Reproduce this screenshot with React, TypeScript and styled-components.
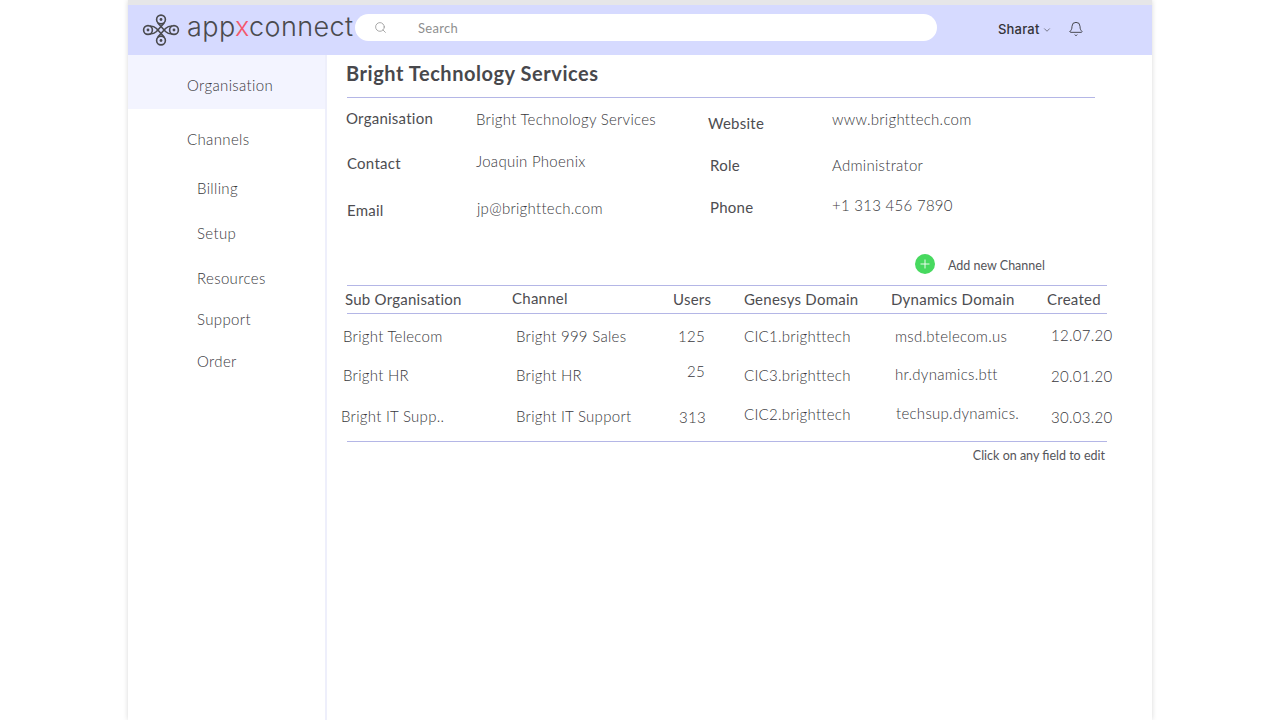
import React from 'react';
import styled, { createGlobalStyle } from 'styled-components';
import { Search, ChevronDown, Bell, Plus } from 'lucide-react';

const GlobalStyle = createGlobalStyle`
  html, body {
    margin: 0;
    padding: 0;
    height: 100%;
    background: #ffffff;
    overflow: hidden;
    font-family: 'Lato', 'Liberation Sans', sans-serif;
    color: #4a4a4a;
  }
  #root { height: 100%; }
`;

const Frame = styled.div`
  width: 1024px;
  height: 720px;
  margin: 0 auto;
  display: flex;
  flex-direction: column;
  background: #ffffff;
  box-shadow: 0 0 5px rgba(0, 0, 0, 0.16);
`;

const TopStrip = styled.div`
  height: 5px;
  background: #e6e6e8;
`;

const Header = styled.header`
  height: 50px;
  flex-shrink: 0;
  display: flex;
  align-items: center;
  background: #d6daff;
  padding-left: 14px;
`;

const LogoMark = styled.svg`
  width: 38px;
  height: 32px;
  flex-shrink: 0;
  color: #4a4a4e;
`;

const LogoText = styled.div`
  margin-left: 7px;
  width: 168px;
  font-family: 'Inter', 'Liberation Sans', sans-serif;
  font-size: 27px;
  font-weight: 300;
  letter-spacing: 0.4px;
  color: #4a4a4e;
  margin-top: -7px;
  white-space: nowrap;
`;

const RedX = styled.span`
  color: #f4586c;
`;

const SearchBar = styled.div`
  width: 582px;
  height: 27px;
  margin-top: -5px;
  display: flex;
  align-items: center;
  background: #ffffff;
  border-radius: 14px;
  padding-left: 19px;
  box-sizing: border-box;
  color: #8f8f8f;
  font-size: 13px;
`;

const SearchLabel = styled.span`
  margin-left: 31px;
  letter-spacing: 0.3px;
`;

const UserArea = styled.div`
  margin-left: 61px;
  margin-top: -3px;
  display: flex;
  align-items: center;
  font-family: 'Inter', 'Liberation Sans', sans-serif;
  font-size: 13px;
  font-weight: 500;
  letter-spacing: 0.2px;
  color: #333338;
`;

const Chevron = styled(ChevronDown)`
  margin-left: 2px;
  margin-top: 2px;
`;

const BellWrap = styled.span`
  margin-left: 16px;
  display: flex;
`;

const Body = styled.div`
  flex: 1;
  display: flex;
  min-height: 0;
`;

const Sidebar = styled.nav`
  width: 197px;
  flex-shrink: 0;
  border-right: 2px solid #eeeffb;
  display: flex;
  flex-direction: column;
`;

const NavItem = styled.div<{ $active?: boolean; $sub?: boolean; $h: number }>`
  height: ${p => p.$h}px;
  box-sizing: border-box;
  display: flex;
  align-items: center;
  padding-left: ${p => (p.$sub ? 69 : 59)}px;
  padding-top: ${p => (p.$active ? 5 : 0)}px;
  background: ${p => (p.$active ? '#f3f4ff' : 'transparent')};
  font-size: 15px;
  font-weight: 300;
  letter-spacing: 0.35px;
  color: #38383c;
`;

const Main = styled.main`
  flex: 1;
  padding: 6px 0 0 19px;
  display: flex;
  flex-direction: column;
`;

const Title = styled.h1`
  margin: 0;
  font-size: 20px;
  font-weight: 700;
  line-height: 24px;
  letter-spacing: 0.55px;
  color: #48484c;
`;

const Rule = styled.div<{ $w: number }>`
  width: ${p => p.$w}px;
  height: 1px;
  margin-left: 1px;
  background: #b4b6e6;
`;

const TitleRule = styled(Rule)`
  margin-top: 12px;
`;

const InfoGrid = styled.div`
  display: grid;
  grid-template-columns: 130px 232px 124px 1fr;
  grid-template-rows: 45px 46px 46px;
  padding-top: 10px;
`;

const Cell = styled.div<{ $top?: number; $left?: number; $strong?: boolean }>`
  margin-top: ${p => p.$top ?? 0}px;
  margin-left: ${p => p.$left ?? 0}px;
  font-size: 15px;
  line-height: 20px;
  font-weight: ${p => (p.$strong ? 400 : 300)};
  letter-spacing: ${p => (p.$strong ? 0.25 : 0.28)}px;
  white-space: nowrap;
  color: ${p => (p.$strong ? '#4d4d51' : '#38383c')};
`;

const AddRow = styled.div`
  margin-top: 5px;
  height: 28px;
  display: flex;
  align-items: center;
  padding-left: 569px;
  font-size: 12.5px;
  color: #55555a;
`;

const AddLabel = styled.span`
  margin-top: 2px;
`;

const AddCircle = styled.span`
  width: 20px;
  height: 20px;
  border-radius: 50%;
  background: #47d95f;
  color: #ffffff;
  display: flex;
  align-items: center;
  justify-content: center;
  margin-right: 13px;
`;

const HeadRule = styled(Rule)`
  margin-top: 7px;
`;

const TableGrid = styled.div<{ $rows: string }>`
  display: grid;
  grid-template-columns: 169px 161px 71px 147px 155px 1fr;
  grid-template-rows: ${p => p.$rows};
  margin-left: -3px;
`;

const Note = styled.div`
  width: 759px;
  text-align: right;
  margin-top: 6px;
  font-size: 12.5px;
  color: #55555a;
`;

const navItems = [
  { label: 'Organisation', h: 54, active: true },
  { label: 'Channels', h: 60 },
  { label: 'Billing', h: 38, sub: true },
  { label: 'Setup', h: 52, sub: true },
  { label: 'Resources', h: 38, sub: true },
  { label: 'Support', h: 44, sub: true },
  { label: 'Order', h: 40, sub: true },
];

type CellDef = [string, number, number];

const infoCells: CellDef[] = [
  ['Organisation', 0, 0],
  ['Bright Technology Services', 1, 0],
  ['Website', 5, 0],
  ['www.brighttech.com', 1, 0],
  ['Contact', 0, 1],
  ['Joaquin Phoenix', -2, 0],
  ['Role', 2, 2],
  ['Administrator', 2, 0],
  ['Email', 1, 1],
  ['jp@brighttech.com', -1, 1],
  ['Phone', -2, 2],
  ['+1 313 456 7890', -4, 0],
];

const headers: CellDef[] = [
  ['Sub Organisation', 3, 2],
  ['Channel', 2, 0],
  ['Users', 3, 0],
  ['Genesys Domain', 3, 0],
  ['Dynamics Domain', 3, 0],
  ['Created', 3, 1],
];

const rows: CellDef[] = [
  ['Bright Telecom', 12, 0],
  ['Bright 999 Sales', 12, 4],
  ['125', 12, 5],
  ['CIC1.brighttech', 12, 0],
  ['msd.btelecom.us', 12, 4],
  ['12.07.20', 11, 5],
  ['Bright HR', 12, 0],
  ['Bright HR', 12, 4],
  ['25', 8, 14],
  ['CIC3.brighttech', 12, 0],
  ['hr.dynamics.btt', 11, 4],
  ['20.01.20', 13, 5],
  ['Bright IT Supp..', 13, -2],
  ['Bright IT Support', 13, 4],
  ['313', 14, 6],
  ['CIC2.brighttech', 11, 0],
  ['techsup.dynamics.', 10, 5],
  ['30.03.20', 14, 5],
];

const Logo = () => (
  <LogoMark viewBox="0 0 38 32" fill="none" stroke="currentColor" strokeWidth="1.6">
    <circle cx="19" cy="5.5" r="4.4" />
    <circle cx="19" cy="26.5" r="4.4" />
    <circle cx="6" cy="16" r="4.4" />
    <circle cx="32" cy="16" r="4.4" />
    <circle cx="19" cy="5.5" r="1.4" fill="currentColor" stroke="none" />
    <circle cx="19" cy="26.5" r="1.4" fill="currentColor" stroke="none" />
    <circle cx="6" cy="16" r="1.4" fill="currentColor" stroke="none" />
    <circle cx="32" cy="16" r="1.4" fill="currentColor" stroke="none" />
    <path d="M15.8 9 L23.5 17.5 Q26 20 30 20" />
    <path d="M22.2 9 L14.5 17.5 Q12 20 8 20" />
    <path d="M15.8 23 L23.5 14.5 Q26 12 30 12" />
    <path d="M22.2 23 L14.5 14.5 Q12 12 8 12" />
  </LogoMark>
);

export default function App() {
  return (
    <>
      <GlobalStyle />
      <Frame>
        <TopStrip />
        <Header>
          <Logo />
          <LogoText>
            app<RedX>x</RedX>connect
          </LogoText>
          <SearchBar>
            <Search size={13} strokeWidth={1.4} />
            <SearchLabel>Search</SearchLabel>
          </SearchBar>
          <UserArea>
            Sharat
            <Chevron size={10} strokeWidth={1.4} />
            <BellWrap>
              <Bell size={16} strokeWidth={1.3} />
            </BellWrap>
          </UserArea>
        </Header>
        <Body>
          <Sidebar>
            {navItems.map(item => (
              <NavItem key={item.label} $active={item.active} $sub={item.sub} $h={item.h}>
                {item.label}
              </NavItem>
            ))}
          </Sidebar>
          <Main>
            <Title>Bright Technology Services</Title>
            <TitleRule $w={748} />
            <InfoGrid>
              {infoCells.map(([text, top, left], i) => (
                <Cell key={text} $top={top} $left={left} $strong={i % 2 === 0}>
                  {text}
                </Cell>
              ))}
            </InfoGrid>
            <AddRow>
              <AddCircle>
                <Plus size={14} strokeWidth={1.5} />
              </AddCircle>
              <AddLabel>Add new Channel</AddLabel>
            </AddRow>
            <HeadRule $w={760} />
            <TableGrid $rows="27px">
              {headers.map(([text, top, left]) => (
                <Cell key={text} $top={top} $left={left} $strong>
                  {text}
                </Cell>
              ))}
            </TableGrid>
            <Rule $w={760} />
            <TableGrid $rows="39px 40px 48px">
              {rows.map(([text, top, left], i) => (
                <Cell key={i} $top={top} $left={left}>
                  {text}
                </Cell>
              ))}
            </TableGrid>
            <Rule $w={760} />
            <Note>Click on any field to edit</Note>
          </Main>
        </Body>
      </Frame>
    </>
  );
}
